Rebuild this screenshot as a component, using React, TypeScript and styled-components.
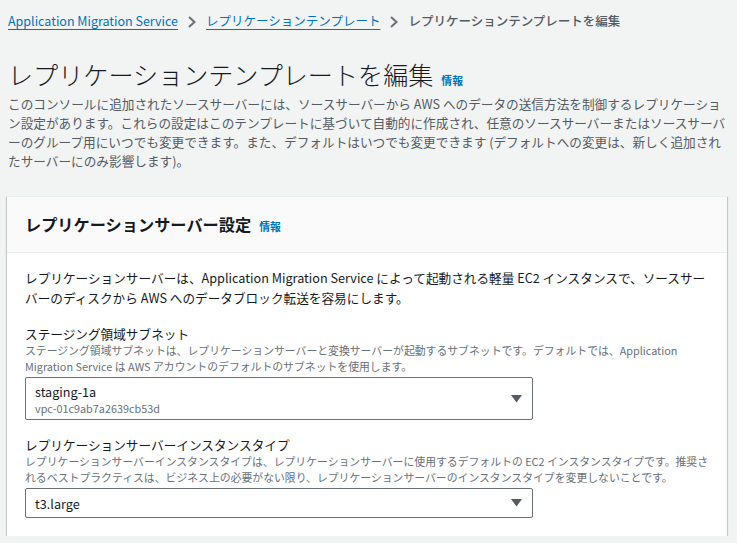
import React from 'react';
import styled, { createGlobalStyle } from 'styled-components';

const GlobalStyle = createGlobalStyle`
    html, body {
        margin: 0;
        padding: 0;
        background: #f2f3f3;
    }
    body {
        font-family: "Noto Sans CJK JP", "Noto Sans", sans-serif;
        color: #16191f;
        -webkit-font-smoothing: antialiased;
    }
`;

const Page = styled.div`
    padding: 11px 10px 0 8px;
    width: 737px;
    box-sizing: border-box;
`;

const Breadcrumbs = styled.nav`
    display: flex;
    align-items: center;
    font-size: 12.5px;
    line-height: 19px;
`;

const Crumb = styled.a`
    color: #0073bb;
    text-decoration: underline;
    text-underline-offset: 3px;
`;

const Current = styled.span`
    color: #545b64;
    font-weight: 500;
`;

const Chevron = styled.svg`
    width: 10px;
    height: 12px;
    margin: 2px 9px 0 9px;
    flex: none;
`;

const TitleRow = styled.div`
    display: flex;
    align-items: baseline;
    gap: 8px;
    margin-top: 29px;
`;

const Title = styled.h1`
    margin: 0;
    font-size: 25.1px;
    line-height: 30px;
    font-weight: 300;
    color: #16191f;
`;

const Info = styled.a`
    color: #0073bb;
    font-size: 10.8px;
    font-weight: 700;
    text-decoration: none;
`;

const Lead = styled.p`
    margin: 5px 0 0 0;
    font-size: 12.65px;
    line-height: 19px;
    color: #545b64;
`;

const Panel = styled.section`
    margin: 26px 0 0 -1px;
    background: #fff;
    box-shadow: 0 1px 1px 0 rgba(0, 28, 36, 0.3), 1px 1px 1px 0 rgba(0, 28, 36, 0.15),
        -1px 1px 1px 0 rgba(0, 28, 36, 0.15);
    border-top: 1px solid #eaeded;
`;

const PanelHeader = styled.header`
    display: flex;
    align-items: baseline;
    gap: 8px;
    background: #fafafa;
    border-bottom: 1px solid #eaeded;
    padding: 16px 18px 17px 18px;
`;

const PanelTitle = styled.h2`
    margin: 0;
    font-size: 16.2px;
    line-height: 22px;
    font-weight: 700;
    color: #16191f;
`;

const PanelBody = styled.div`
    padding: 15px 18px 18px 18px;
    display: flex;
    flex-direction: column;
`;

const BodyText = styled.p`
    margin: 0 0 17px 0;
    font-size: 12.65px;
    line-height: 20px;
    color: #16191f;
`;

const Field = styled.div`
    display: flex;
    flex-direction: column;
    & + & {
        margin-top: 16px;
    }
`;

const Label = styled.label`
    font-size: 12.65px;
    line-height: 18px;
    color: #16191f;
`;

const Hint = styled.div`
    font-size: 10.85px;
    line-height: 15.5px;
    color: #687078;
    margin-bottom: 3px;
`;

const SelectBox = styled.div<{ $tall?: boolean }>`
    width: 508px;
    box-sizing: border-box;
    border: 1px solid #687078;
    border-radius: 2px;
    background: #fff;
    display: flex;
    align-items: center;
    justify-content: space-between;
    padding: ${p => (p.$tall ? '3px 9px 3px 9px' : '4px 9px 4px 9px')};
    height: ${p => (p.$tall ? '43px' : '30px')};
`;

const SelectValue = styled.div`
    display: flex;
    flex-direction: column;
`;

const ValueMain = styled.span`
    font-size: 12.65px;
    line-height: 19px;
    color: #16191f;
`;

const ValueSub = styled.span`
    font-size: 10.85px;
    line-height: 15px;
    color: #687078;
`;

const Caret = () => (
    <svg width="11" height="8" viewBox="0 0 11 8" style={{ marginRight: 1 }}>
        <path d="M0 0 L11 0 L5.5 7.5 Z" fill="#545b64" />
    </svg>
);

const ChevronIcon = () => (
    <Chevron viewBox="0 0 10 12">
        <path d="M2 1 L7.5 6 L2 11" stroke="#687078" strokeWidth="2" fill="none" />
    </Chevron>
);

export default function App() {
    return (
        <>
            <GlobalStyle />
            <Page>
                <Breadcrumbs>
                    <Crumb>Application Migration Service</Crumb>
                    <ChevronIcon />
                    <Crumb>レプリケーションテンプレート</Crumb>
                    <ChevronIcon />
                    <Current>レプリケーションテンプレートを編集</Current>
                </Breadcrumbs>

                <TitleRow>
                    <Title>レプリケーションテンプレートを編集</Title>
                    <Info>情報</Info>
                </TitleRow>
                <Lead>
                    このコンソールに追加されたソースサーバーには、ソースサーバーから AWS へのデータの送信方法を制御するレプリケーション設定があります。これらの設定はこのテンプレートに基づいて自動的に作成され、任意のソースサーバーまたはソースサーバーのグループ用にいつでも変更できます。また、デフォルトはいつでも変更できます (デフォルトへの変更は、新しく追加されたサーバーにのみ影響します)。
                </Lead>

                <Panel>
                    <PanelHeader>
                        <PanelTitle>レプリケーションサーバー設定</PanelTitle>
                        <Info>情報</Info>
                    </PanelHeader>
                    <PanelBody>
                        <BodyText>
                            レプリケーションサーバーは、Application Migration Service によって起動される軽量 EC2 インスタンスで、ソースサーバーのディスクから AWS へのデータブロック転送を容易にします。
                        </BodyText>

                        <Field>
                            <Label>ステージング領域サブネット</Label>
                            <Hint>
                                ステージング領域サブネットは、レプリケーションサーバーと変換サーバーが起動するサブネットです。デフォルトでは、Application Migration Service は AWS アカウントのデフォルトのサブネットを使用します。
                            </Hint>
                            <SelectBox $tall>
                                <SelectValue>
                                    <ValueMain>staging-1a</ValueMain>
                                    <ValueSub>vpc-01c9ab7a2639cb53d</ValueSub>
                                </SelectValue>
                                <Caret />
                            </SelectBox>
                        </Field>

                        <Field>
                            <Label>レプリケーションサーバーインスタンスタイプ</Label>
                            <Hint>
                                レプリケーションサーバーインスタンスタイプは、レプリケーションサーバーに使用するデフォルトの EC2 インスタンスタイプです。推奨されるベストプラクティスは、ビジネス上の必要がない限り、レプリケーションサーバーのインスタンスタイプを変更しないことです。
                            </Hint>
                            <SelectBox>
                                <SelectValue>
                                    <ValueMain>t3.large</ValueMain>
                                </SelectValue>
                                <Caret />
                            </SelectBox>
                        </Field>
                    </PanelBody>
                </Panel>
            </Page>
        </>
    );
}
